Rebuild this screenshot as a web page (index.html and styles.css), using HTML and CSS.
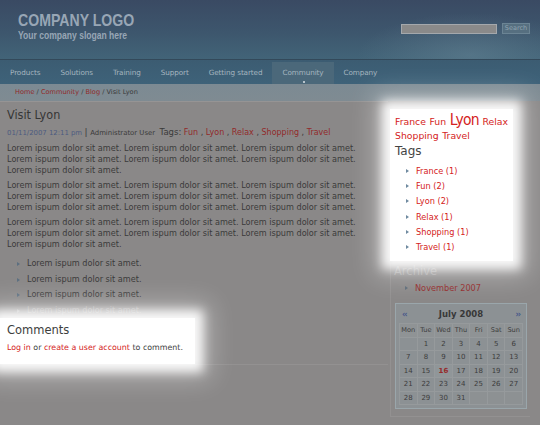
FILE: index.html
```html
<!DOCTYPE html>
<html>
<head>
<meta charset="utf-8">
<link rel="stylesheet" href="styles.css">
</head>
<body>
<div class="page">
  <header class="header">
    <div class="logo">
      <div class="logo-name">COMPANY LOGO</div>
      <div class="logo-slogan">Your company slogan here</div>
    </div>
    <form class="search">
      <span class="search-input"></span>
      <span class="search-btn">Search</span>
    </form>
  </header>
  <nav class="nav">
    <span class="nav-item">Products</span>
    <span class="nav-item">Solutions</span>
    <span class="nav-item">Training</span>
    <span class="nav-item">Support</span>
    <span class="nav-item">Getting started</span>
    <span class="nav-item active">Community</span>
    <span class="nav-item">Company</span>
  </nav>
  <div class="crumbs">
    <a class="dlink">Home</a> / <a class="dlink">Community</a> / <a class="dlink">Blog</a> / Visit Lyon
  </div>
  <div class="body">
    <main class="main">
      <h1 class="title">Visit Lyon</h1>
      <div class="meta">
        <span class="date">01/11/2007 12:11 pm</span> <span class="sep">|</span> <span class="author">Administrator User</span>
        <span class="tags-label">Tags:</span>
        <a class="dlink">Fun</a> , <a class="dlink">Lyon</a> , <a class="dlink">Relax</a> , <a class="dlink">Shopping</a> , <a class="dlink">Travel</a>
      </div>
      <p class="para">Lorem ipsum dolor sit amet. Lorem ispum dolor sit amet. Lorem ispum dolor sit amet. Lorem ispum dolor sit amet. Lorem ispum dolor sit amet. Lorem ispum dolor sit amet. Lorem ispum dolor sit amet.</p>
      <p class="para">Lorem ispum dolor sit amet. Lorem ispum dolor sit amet. Lorem ispum dolor sit amet. Lorem ispum dolor sit amet. Lorem ispum dolor sit amet. Lorem ispum dolor sit amet. Lorem ispum dolor sit amet. Lorem ispum dolor sit amet. Lorem ispum dolor sit amet.</p>
      <p class="para">Lorem ispum dolor sit amet. Lorem ispum dolor sit amet. Lorem ispum dolor sit amet. Lorem ispum dolor sit amet. Lorem ispum dolor sit amet. Lorem ispum dolor sit amet. Lorem ispum dolor sit amet.</p>
      <ul class="list">
        <li>Lorem ispum dolor sit amet.</li>
        <li>Lorem ispum dolor sit amet.</li>
        <li>Lorem ispum dolor sit amet.</li>
        <li class="faded">Lorem ispum dolor sit amet.</li>
      </ul>
      <section class="comments spot">
        <h2 class="comments-title">Comments</h2>
        <div class="comments-text"><a class="link">Log in</a> or <a class="link">create a user account</a> to comment.</div>
      </section>
    </main>
    <aside class="side">
      <section class="tagbox spot">
        <div class="cloud">
          <a class="link c-s">France</a> <a class="link c-m">Fun</a> <a class="link c-xl">Lyon</a> <a class="link c-s">Relax</a>
          <a class="link c-m">Shopping</a> <a class="link c-m">Travel</a>
        </div>
        <h2 class="side-title">Tags</h2>
        <ul class="side-list">
          <li><a class="link">France (1)</a></li>
          <li><a class="link">Fun (2)</a></li>
          <li><a class="link">Lyon (2)</a></li>
          <li><a class="link">Relax (1)</a></li>
          <li><a class="link">Shopping (1)</a></li>
          <li><a class="link">Travel (1)</a></li>
        </ul>
      </section>
      <div class="panel">
        <h2 class="archive-title">Archive</h2>
        <ul class="side-list dim">
          <li><a class="dlink">November 2007</a></li>
        </ul>
        <div class="cal">
          <div class="cal-head">
            <span class="cal-arrow">&lsaquo;&lsaquo;</span>
            <span class="cal-month">July 2008</span>
            <span class="cal-arrow">&rsaquo;&rsaquo;</span>
          </div>
          <table class="cal-table">
            <tr class="cal-days"><th>Mon</th><th>Tue</th><th>Wed</th><th>Thu</th><th>Fri</th><th>Sat</th><th>Sun</th></tr>
            <tr><td></td><td>1</td><td>2</td><td>3</td><td>4</td><td>5</td><td>6</td></tr>
            <tr><td>7</td><td>8</td><td>9</td><td>10</td><td>11</td><td>12</td><td>13</td></tr>
            <tr><td>14</td><td>15</td><td class="today">16</td><td>17</td><td>18</td><td>19</td><td>20</td></tr>
            <tr><td>21</td><td>22</td><td>23</td><td>24</td><td>25</td><td>26</td><td>27</td></tr>
            <tr><td>28</td><td>29</td><td>30</td><td>31</td><td class="blank"></td><td class="blank"></td><td class="blank"></td></tr>
          </table>
        </div>
      </div>
    </aside>
  </div>
</div>
</body>
</html>
```

FILE: styles.css
```css
* { box-sizing: border-box; }
html, body { margin: 0; padding: 0; }
body {
  width: 540px;
  height: 425px;
  overflow: hidden;
  background: #8a8888;
  font-family: "DejaVu Sans", Verdana, sans-serif;
  color: #3a3a3a;
}
.page { width: 540px; }

.header {
  height: 59px;
  display: flex;
  justify-content: space-between;
  align-items: flex-start;
  background:
    radial-gradient(ellipse 160px 60px at 470px 55px, rgba(120,150,165,0.35), rgba(120,150,165,0) 70%),
    linear-gradient(180deg, #3a4a63 0%, #3d566d 55%, #426478 100%);
}
.logo { padding: 12px 0 0 18px; }
.logo-name {
  font-family: "Liberation Sans", Arial, sans-serif;
  font-weight: bold;
  font-size: 17px;
  line-height: 18px;
  height: 18px;
  color: #98a6b5;
  transform: scaleX(0.83);
  transform-origin: left center;
  white-space: nowrap;
}
.logo-slogan {
  font-family: "Liberation Sans", Arial, sans-serif;
  font-weight: bold;
  font-size: 10px;
  line-height: 11px;
  height: 11px;
  color: #98a6b5;
  transform: scaleX(0.855);
  transform-origin: left center;
  white-space: nowrap;
}
.search {
  display: flex;
  align-items: center;
  gap: 5px;
  margin: 23px 10px 0 0;
}
.search-input {
  width: 96px;
  height: 10px;
  background: #8a8a8a;
  border: 1px solid #a4a8ac;
}
.search-btn {
  width: 28px;
  height: 11px;
  background: #566f80;
  border: 1px solid #6b8494;
  font-size: 6.5px;
  line-height: 9px;
  text-align: center;
  color: #8fa3b0;
}

.nav {
  height: 25px;
  display: flex;
  padding: 2px 0 0 0;
  border-top: 1px solid #33495a;
  background: linear-gradient(180deg, #3c5c72 0%, #3e6279 100%);
}
.nav-item {
  position: relative;
  padding: 6px 10px 0 10px;
  font-size: 7.25px;
  color: #a4b4bf;
  letter-spacing: -0.1px;
}
.nav-item.active { background: #4b687a; }
.nav-item.active::after {
  content: "";
  position: absolute;
  left: 50%;
  bottom: 1px;
  width: 2px;
  height: 2px;
  background: #b8c4cc;
}

.crumbs {
  height: 17px;
  padding: 4px 0 0 15px;
  font-size: 6.6px;
  color: #3a3a3a;
  background: linear-gradient(180deg, #7c8a93 0%, #7f8b92 100%);
}
.dlink { color: #922a2a; text-decoration: none; }
.link { color: #d42222; text-decoration: none; }

.body { display: flex; }
.main {
  width: 388px;
  padding: 4px 0 0 7px;
  border-top: 1px solid #969494;
  border-bottom: 1px solid #939191;
  align-self: flex-start;
  position: relative;
}
.title {
  margin: 0;
  font-family: "DejaVu Sans Condensed", "DejaVu Sans", sans-serif;
  font-size: 12.5px;
  font-weight: normal;
  line-height: 18px;
  color: #363636;
}
.meta {
  margin-top: 3px;
  font-size: 8px;
  line-height: 11px;
}
.date { color: #4c5b80; font-size: 6.9px; }
.sep { font-size: 9px; }
.author { font-size: 6.9px; }
.tags-label { font-size: 8.5px; margin-left: 2px; }
.para {
  margin: 4px 0 0 0;
  width: 370px;
  font-size: 8.15px;
  line-height: 11px;
}
.list {
  margin: 6px 0 0 0;
  padding: 0 0 0 20px;
  list-style: none;
  font-size: 8.15px;
  line-height: 15.5px;
}
.list li { position: relative; }
.list li::before, .side-list li::before {
  content: "";
  position: absolute;
  left: -10px;
  top: 6px;
  border-left: 3px solid #5c6f80;
  border-top: 2px solid transparent;
  border-bottom: 2px solid transparent;
}
.list li.faded { color: #a9a7a7; }
.list li.faded::before { border-left-color: #a9a7a7; }

.spot {
  background: #ffffff;
  box-shadow: 0 0 10px 8px rgba(255,255,255,0.92), 0 0 24px 15px rgba(255,255,255,0.35);
  position: relative;
  z-index: 2;
}
.comments {
  margin: 0 0 0 -7px;
  width: 195px;
  height: 46px;
  padding: 4px 0 0 7px;
}
.comments-title {
  margin: 0;
  font-size: 11.5px;
  font-weight: normal;
  line-height: 16px;
  color: #3e3e3e;
}
.comments-text {
  margin-top: 5px;
  font-size: 7.9px;
  color: #3e3e3e;
}

.side { width: 152px; position: relative; }
.tagbox {
  margin: 8px 0 0 2px;
  width: 123px;
  height: 152px;
  padding: 5px 0 0 5px;
}
.cloud { line-height: 12px; word-spacing: -1.5px; }
.c-s { font-size: 9.3px; }
.c-m { font-size: 9.3px; }
.c-xl {
  font-family: "DejaVu Sans Condensed", "DejaVu Sans", sans-serif;
  font-size: 15.5px;
  letter-spacing: -0.7px;
}
.side-title {
  margin: 1px 0 0 0;
  font-size: 12px;
  font-weight: normal;
  line-height: 16px;
  color: #444;
}
.side-list {
  margin: 5px 0 0 0;
  padding: 0 0 0 21px;
  list-style: none;
  font-size: 8.2px;
  line-height: 15.2px;
}
.side-list li { position: relative; }
.side-list li::before { left: -10px; top: 5px; border-left-color: #6f8aa0; }

.panel {
  margin: 2px 0 0 2px;
  width: 140px;
  padding: 0 0 7px 3px;
  border-left: 1px solid #939191;
  border-bottom: 1px solid #939191;
}
.archive-title {
  margin: 0;
  font-size: 11.5px;
  font-weight: normal;
  line-height: 16px;
  color: #a6a4a4;
}
.side-list.dim { margin-top: 2px; }
.side-list.dim li::before { border-left-color: #5c6a78; }
.cal {
  margin: 7px 0 0 1px;
  width: 132px;
  padding: 2px 3px 3px 3px;
  background: #8c9194;
  border: 1px solid #9aa6ab;
}
.cal-head {
  display: flex;
  justify-content: space-between;
  align-items: center;
  height: 16px;
  padding: 0 3px;
}
.cal-arrow { color: #45568a; font-size: 8px; font-weight: bold; letter-spacing: -1px; }
.cal-month { font-size: 8.5px; font-weight: bold; color: #383838; }
.cal-table {
  width: 100%;
  border-collapse: collapse;
  margin-top: 1px;
}
.cal-table th, .cal-table td {
  width: 17.6px;
  height: 13.5px;
  padding: 0;
  text-align: center;
  font-size: 7px;
  font-weight: normal;
  color: #3c3c3c;
  border: 1px solid #969a9c;
}
.cal-table th { font-size: 6.6px; background: #8f9395; }
.cal-table td.today { color: #962a2a; font-weight: bold; background: #909699; }
.cal-table td.blank { background: #8d9193; }
```
